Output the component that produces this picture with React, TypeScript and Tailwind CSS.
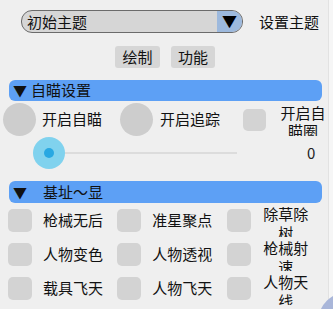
import React from "react";

const font = { fontFamily: '"Noto Sans CJK SC", "Noto Sans", sans-serif' };

function Check({ label, wrap }: { label: string; wrap?: boolean }) {
  return (
    <div className="flex h-[34px] w-[118px] items-center">
      <div className="ml-[8px] h-[23px] w-[24px] shrink-0 rounded-[5px] bg-[#d3d3d3]" />
      {wrap ? (
        <div className="ml-[12px] h-[34px] w-[46px] overflow-hidden pt-[1px] text-center text-[15px] leading-[19px] text-[#111]">
          {label}
        </div>
      ) : (
        <div className="ml-[11px] text-[15px] leading-[18px] text-[#111]">{label}</div>
      )}
    </div>
  );
}

export default function App() {
  return (
    <div
      className="relative flex h-[309px] w-[333px] overflow-hidden bg-[#efefef]"
      style={font}
    >
      <div className="flex w-[328px] flex-col">
        <div className="mt-[10px] flex items-center">
          <div className="ml-[21px] flex h-[23px] w-[222px] items-center overflow-hidden rounded-[11px] border-[1.5px] border-[#6b6b6b] bg-[#d6d6d6]">
            <div className="flex-1 pl-[5px] text-[15px] leading-[18px] text-[#111]">初始主题</div>
            <div className="flex h-full w-[25px] items-center justify-center bg-[#9db9dd] text-[15px] text-black">
              ▼
            </div>
          </div>
          <div className="ml-[16px] text-[15px] leading-[18px] text-[#111]">设置主题</div>
        </div>

        <div className="ml-[115px] mt-[13px] flex gap-[11px]">
          <div className="flex h-[22px] w-[45px] items-center justify-center rounded-[3px] bg-[#d6d6d6] text-[15px] text-[#111]">
            绘制
          </div>
          <div className="flex h-[22px] w-[44px] items-center justify-center rounded-[3px] bg-[#d6d6d6] text-[15px] text-[#111]">
            功能
          </div>
        </div>

        <div className="ml-[9px] mt-[12px] flex h-[21px] w-[313px] items-center rounded-[6px] bg-[#5da0f5] pl-[4px] text-[15px] text-[#111]">
          <span className="text-[14px]">▼</span>
          <span className="ml-[4px]">自瞄设置</span>
        </div>

        <div className="mt-[2px] flex h-[33px] items-center">
          <div className="ml-[3px] h-[33px] w-[33px] rounded-full bg-[#cdcdcd]" />
          <div className="ml-[6px] text-[15px] text-[#111]">开启自瞄</div>
          <div className="ml-[18px] h-[33px] w-[33px] rounded-full bg-[#cdcdcd]" />
          <div className="ml-[7px] text-[15px] text-[#111]">开启追踪</div>
          <div className="ml-[23px] h-[22px] w-[23px] rounded-[5px] bg-[#d3d3d3]" />
          <div className="ml-[14px] h-[33px] w-[46px] overflow-hidden pt-[1px] text-center text-[15px] leading-[18px] text-[#111]">
            开启自瞄圈
          </div>
        </div>

        <div className="mt-[1px] flex h-[32px] items-center">
          <div className="relative ml-[33px] flex h-[32px] w-[32px] items-center justify-center rounded-full bg-[#80d2ee]">
            <div className="h-[10px] w-[10px] rounded-full bg-[#28a8e2]" />
          </div>
          <div className="h-[2px] w-[172px] bg-[#dcdcdc]" />
          <div className="ml-[70px] text-[15px] text-[#222]">0</div>
        </div>

        <div className="ml-[9px] mt-[12px] flex h-[22px] w-[313px] items-center rounded-[6px] bg-[#5da0f5] pl-[4px] text-[15px] text-[#111]">
          <span className="text-[14px]">▼</span>
          <span className="ml-[16px]">基址～显</span>
        </div>

        <div className="flex flex-col">
          <div className="flex">
            <Check label="枪械无后" />
            <Check label="准星聚点" />
            <Check label="除草除树" wrap />
          </div>
          <div className="flex">
            <Check label="人物变色" />
            <Check label="人物透视" />
            <Check label="枪械射速" wrap />
          </div>
          <div className="flex">
            <Check label="载具飞天" />
            <Check label="人物飞天" />
            <Check label="人物天线" wrap />
          </div>
        </div>
      </div>
      <div className="w-[5px] border-l border-[#e2e2e2] bg-[#f6f6f6]" />
      <div className="absolute left-[318px] top-[292px] h-[60px] w-[60px] rounded-full bg-[#a9b6d9]" />
    </div>
  );
}
